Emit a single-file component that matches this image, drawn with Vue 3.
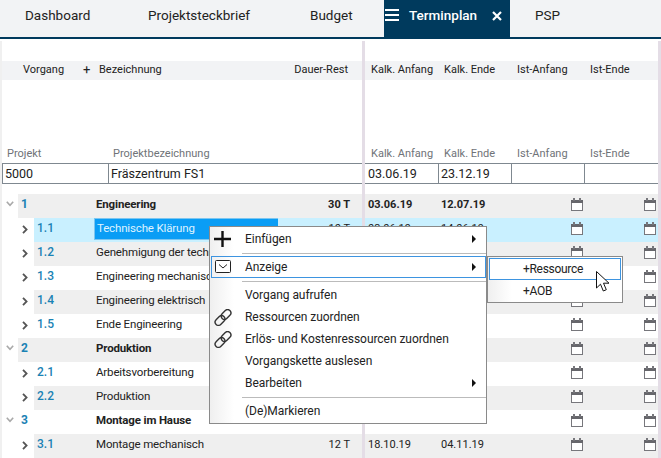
<script setup>
const tabs = [
  { label: 'Dashboard' },
  { label: 'Projektsteckbrief' },
  { label: 'Budget' },
  { label: 'Terminplan', active: true },
  { label: 'PSP' }
]
const rows = [
  { no: '1', name: 'Engineering', dur: '30 T', start: '03.06.19', end: '12.07.19', head: true, tint: true },
  { no: '1.1', name: 'Technische Klärung', dur: '10 T', start: '03.06.19', end: '14.06.19', sel: true },
  { no: '1.2', name: 'Genehmigung der technischen Daten', tint: true },
  { no: '1.3', name: 'Engineering mechanisch' },
  { no: '1.4', name: 'Engineering elektrisch', tint: true },
  { no: '1.5', name: 'Ende Engineering' },
  { no: '2', name: 'Produktion', head: true, tint: true },
  { no: '2.1', name: 'Arbeitsvorbereitung' },
  { no: '2.2', name: 'Produktion', tint: true },
  { no: '3', name: 'Montage im Hause', head: true },
  { no: '3.1', name: 'Montage mechanisch', dur: '12 T', start: '18.10.19', end: '04.11.19', tint: true }
]
const rowClass = (r) => ({ head: r.head, tint: r.tint, sel: r.sel })
</script>

<template>
  <div class="app">
    <nav class="tabs">
      <div v-for="t in tabs" :key="t.label" class="tab" :class="{ active: t.active }">
        <svg v-if="t.active" class="burger" width="14" height="12" viewBox="0 0 14 12">
          <path d="M0 1h14M0 6h14M0 11h14" stroke="#fff" stroke-width="2" fill="none" />
        </svg>
        <span>{{ t.label }}</span>
        <svg v-if="t.active" class="close" width="10" height="10" viewBox="0 0 10 10">
          <path d="M1 1l8 8M9 1l-8 8" stroke="#fff" stroke-width="2.2" fill="none" />
        </svg>
      </div>
    </nav>

    <main class="panes">
      <section class="pane left">
        <div class="colhead">
          <span class="c-vorgang">Vorgang</span>
          <span class="c-plus">+</span>
          <span class="c-bez">Bezeichnung</span>
          <span class="c-dauer">Dauer-Rest</span>
        </div>
        <div class="labels">
          <span class="l-projekt">Projekt</span>
          <span>Projektbezeichnung</span>
        </div>
        <div class="inputs">
          <div class="inp i-projekt">5000</div>
          <div class="inp i-name">Fräszentrum FS1</div>
        </div>
        <div class="rows">
          <div v-for="r in rows" :key="r.no" class="row" :class="rowClass(r)">
            <svg v-if="r.head" class="chev" width="8" height="6" viewBox="0 0 8 6">
              <path d="M.8 .8L4 4.4 7.2 .8" stroke="#a9a9a9" stroke-width="1.6" fill="none" />
            </svg>
            <svg v-else class="chev" width="6" height="9" viewBox="0 0 6 9">
              <path d="M1 .8L4.6 4.5 1 8.2" stroke="#555" stroke-width="1.8" fill="none" />
            </svg>
            <div class="fill">
              <span class="no">{{ r.no }}</span>
              <span class="name">{{ r.name }}</span>
              <span class="dur">{{ r.dur }}</span>
            </div>
          </div>
        </div>
      </section>

      <div class="split"></div>

      <section class="pane right">
        <div class="colhead cols">
          <span>Kalk. Anfang</span><span>Kalk. Ende</span><span>Ist-Anfang</span><span>Ist-Ende</span>
        </div>
        <div class="labels cols">
          <span>Kalk. Anfang</span><span>Kalk. Ende</span><span>Ist-Anfang</span><span>Ist-Ende</span>
        </div>
        <div class="inputs dates">
          <div class="inp">03.06.19</div>
          <div class="inp">23.12.19</div>
          <div class="inp"></div>
          <div class="inp"></div>
        </div>
        <div class="rows">
          <div v-for="r in rows" :key="r.no" class="rrow" :class="rowClass(r)">
            <span>{{ r.start }}</span>
            <span>{{ r.end }}</span>
            <svg v-for="n in 2" :key="n" class="cal" width="12" height="13" viewBox="0 0 12 13">
              <rect x=".5" y="2.500" width="11" height="10" fill="#fff" stroke="#77777c" />
              <rect x="0" y="2" width="12" height="3" fill="#66666b" />
              <rect x="2" y="0" width="2" height="3" fill="#77777c" />
              <rect x="8" y="0" width="2" height="3" fill="#77777c" />
            </svg>
          </div>
        </div>
      </section>

      <div class="split"></div>
    </main>

    <div class="menu">
      <div class="item">
        <svg class="ico" width="17" height="16" viewBox="0 0 17 16"><path d="M0 8h17M8.500 0v16" stroke="#111" stroke-width="2.400" fill="none" /></svg>
        <span>Einfügen</span>
        <i class="arrow"></i>
      </div>
      <div class="sep"></div>
      <div class="item current">
        <svg class="ico" width="16" height="13" viewBox="0 0 16 13">
          <rect x=".5" y=".5" width="15" height="12" rx="1" fill="#fff" stroke="#222" />
          <path d="M4 4.500l4 3.500 4-3.500" stroke="#222" fill="none" />
        </svg>
        <span>Anzeige</span>
        <i class="arrow"></i>
      </div>
      <div class="sep"></div>
      <div class="item"><span>Vorgang aufrufen</span></div>
      <div class="item">
        <svg class="ico" width="18" height="17" viewBox="0 0 18 17">
          <g fill="none" stroke="#333" stroke-width="1.400">
            <rect x="6.500" y="2.250" width="11" height="6.500" rx="3.250" transform="rotate(-45 12 5.500)" />
            <rect x=".5" y="8.250" width="11" height="6.500" rx="3.250" transform="rotate(-45 6 11.500)" />
          </g>
        </svg>
        <span>Ressourcen zuordnen</span>
      </div>
      <div class="item">
        <svg class="ico" width="18" height="17" viewBox="0 0 18 17">
          <g fill="none" stroke="#333" stroke-width="1.400">
            <rect x="6.500" y="2.250" width="11" height="6.500" rx="3.250" transform="rotate(-45 12 5.500)" />
            <rect x=".5" y="8.250" width="11" height="6.500" rx="3.250" transform="rotate(-45 6 11.500)" />
          </g>
        </svg>
        <span>Erlös- und Kostenressourcen zuordnen</span>
      </div>
      <div class="item"><span>Vorgangskette auslesen</span></div>
      <div class="item">
        <span>Bearbeiten</span>
        <i class="arrow"></i>
      </div>
      <div class="sep"></div>
      <div class="item"><span>(De)Markieren</span></div>
    </div>

    <div class="submenu">
      <div class="subitem current">+Ressource</div>
      <div class="subitem">+AOB</div>
    </div>

    <svg class="cursor" width="14" height="22" viewBox="0 0 14 22">
      <path d="M.5 .5v16.500l4-3.800 2.800 6.800 3-1.300-2.800-6.500h5.500z" fill="#fff" stroke="#111" stroke-linejoin="round" />
    </svg>
  </div>
</template>

<style scoped>
.app {
  position: relative;
  width: 661px;
  height: 458px;
  overflow: hidden;
  background: #fff;
  font-family: Roboto, "Liberation Sans", sans-serif;
  font-size: 12px;
  color: #222;
}
.tabs {
  display: grid;
  grid-template-columns: 123px 162px 74px 126px auto;
  height: 37px;
  padding-left: 25px;
  background: #f2f3f5;
  border-bottom: 2px solid #003a5d;
  font-size: 13.5px;
}
.tab {
  display: flex;
  align-items: center;
  padding-bottom: 7px;
  box-sizing: border-box;
  color: #222;
}
.tab:last-child { padding-left: 25px; }
.tab.active {
  position: relative;
  background: #003a5d;
  color: #fff;
  font-weight: 500;
  padding-left: 25px;
}
.burger { position: absolute; left: 1px; top: 9px; }
.close { position: absolute; left: 108px; top: 11px; }

.panes {
  display: grid;
  grid-template-columns: 362px 3px 293px 3px;
  height: 419px;
  padding-top: 2px;
}
.pane { min-width: 0; }
.left { border-left: 2px solid #f0f0f0; }
.split { background: #e4dde6; }

.colhead {
  display: flex;
  align-items: center;
  height: 19px;
  margin-top: 20px;
  padding-bottom: 2px;
  box-sizing: border-box;
  background: #f2f3f5;
  font-size: 11px;
  color: #222;
}
.c-vorgang { margin-left: 21px; width: 60px; }
.c-plus { width: 16px; font-size: 13px; }
.c-bez { flex: 1; }
.c-dauer { margin-right: 14px; }

.labels {
  display: flex;
  align-items: center;
  height: 19px;
  margin-top: 64px;
  font-size: 11px;
  color: #6f7378;
}
.l-projekt { margin-left: 5px; width: 106px; }

.cols { display: grid; grid-template-columns: repeat(4, 73px); padding-left: 6px; }

.inputs {
  display: flex;
  height: 21px;
  border-top: 1px solid #7f8890;
  border-bottom: 1px solid #7f8890;
  box-sizing: border-box;
  font-size: 12.5px;
  line-height: 19px;
}
.inp { box-sizing: border-box; padding-left: 3px; }
.i-projekt { width: 107px; border-left: 1px solid #7f8890; border-right: 1px solid #7f8890; padding-left: 2px; }
.i-name { flex: 1; padding-left: 2px; }
.dates .inp { width: 73px; border-right: 1px solid #7f8890; }
.dates .inp:first-child { width: 74px; }
.dates .inp:nth-child(n+2) { padding-left: 2px; }
.dates .inp:last-child { flex: 1; border-right: 0; }

.rows { margin-top: 10px; font-size: 11px; }
.row {
  position: relative;
  display: flex;
  height: 24px;
  padding-left: 32px;
}
.row.head { padding-left: 16px; }
.chev { position: absolute; left: 20px; top: 7px; }
.row.head .chev { left: 4px; top: 7px; }
.fill {
  flex: 1;
  display: flex;
  align-items: center;
  padding: 0 12px 4px 3px;
}
.row.tint .fill { background: #efefef; }
.row.sel .fill { background: #c9f0ff; }
.row.head .fill { font-weight: 700; }
.no {
  width: 59px;
  color: #1a82b4;
  font-weight: 500;
  font-size: 12px;
}
.row.head .no { width: 75px; font-weight: 700; }
.name {
  position: relative;
  flex: 1;
  white-space: nowrap;
  overflow: hidden;
  font-size: 11.5px;
  letter-spacing: -.15px;
}
.row.sel .name {
  flex: 0 0 184px;
  align-self: flex-start;
  margin-left: -2px;
  height: 22px;
  line-height: 18px;
  padding-left: 2px;
  box-sizing: border-box;
  background: #0a9df5;
  border: 1px solid #7cc6f0;
  border-right: 0;
  color: #dff3ff;
}
.dur { margin-left: auto; }

.rrow {
  display: grid;
  grid-template-columns: 73px 130px 73px 17px;
  align-items: center;
  height: 24px;
  padding: 0 0 4px 3px;
  box-sizing: border-box;
}
.rrow.tint { background: #efefef; }
.rrow.sel { background: #c9f0ff; }
.rrow.head { font-weight: 700; }
.cal { align-self: start; margin-top: 4px; }

.menu {
  position: absolute;
  left: 209px;
  top: 226px;
  width: 278px;
  height: 198px;
  box-sizing: border-box;
  padding-top: 1px;
  border: 1px solid #8a8a8a;
  background: linear-gradient(90deg, #efefef 0, #fff 24px);
  letter-spacing: -.05px;
}
.item {
  position: relative;
  display: flex;
  align-items: center;
  height: 22px;
  padding-left: 35px;
}
.item.current {
  margin-left: 1px;
  padding-left: 34px;
  outline: 1px solid #3d94e0;
  outline-offset: -1px;
}
.ico { position: absolute; left: 4px; top: 3px; }
.current .ico { left: 4px; top: 4px; }
.sep { height: 1px; margin: 3px 0 2px 32px; background: #bbb; }
.arrow {
  position: absolute;
  right: 10px;
  top: 7px;
  border-left: 4px solid #111;
  border-top: 4px solid transparent;
  border-bottom: 4px solid transparent;
}

.submenu {
  position: absolute;
  left: 487px;
  top: 256px;
  width: 136px;
  height: 47px;
  box-sizing: border-box;
  padding: 1px;
  border: 1px solid #8a8a8a;
  background: linear-gradient(90deg, #efefef 0, #fff 24px);
  letter-spacing: -.3px;
}
.subitem {
  display: flex;
  align-items: center;
  height: 22px;
  padding-left: 34px;
  box-sizing: border-box;
}
.subitem.current { outline: 1px solid #3d94e0; outline-offset: -1px; background: #fff; }
.cursor { position: absolute; left: 596px; top: 271px; }
</style>
